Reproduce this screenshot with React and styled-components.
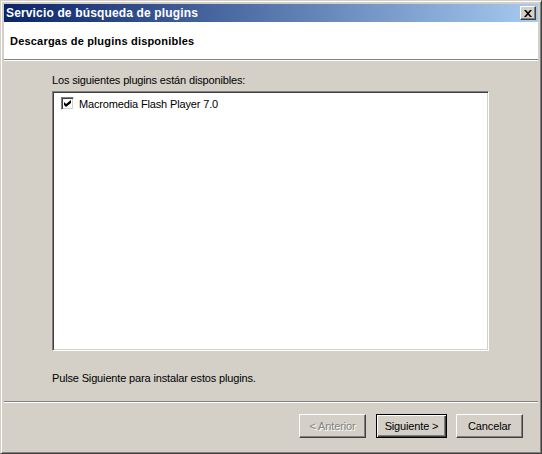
import React from "react";
import styled, { createGlobalStyle } from "styled-components";

const GlobalStyle = createGlobalStyle`
  html, body {
    margin: 0;
    padding: 0;
    background: #d4d0c8;
  }
  * {
    box-sizing: border-box;
  }
`;

const Window = styled.div`
  width: 542px;
  height: 454px;
  display: flex;
  flex-direction: column;
  background: #d4d0c8;
  border: 1px solid;
  border-color: #d4d0c8 #404040 #404040 #d4d0c8;
  box-shadow: inset 1px 1px #ffffff, inset -1px -1px #808080;
  padding: 3px;
  font-family: "Liberation Sans", Arial, sans-serif;
  font-size: 11px;
  letter-spacing: -0.15px;
  color: #000;
`;

const TitleBar = styled.div`
  height: 18px;
  display: flex;
  align-items: center;
  justify-content: space-between;
  padding: 0 2px 0 2px;
  background: linear-gradient(to right, #0a246a, #a6caf0);
`;

const Title = styled.span`
  color: #fff;
  font-weight: bold;
  font-size: 12px;
  letter-spacing: 0.15px;
`;

const CloseButton = styled.div`
  width: 16px;
  height: 14px;
  display: flex;
  align-items: center;
  justify-content: center;
  background: #d4d0c8;
  border: 1px solid;
  border-color: #ffffff #404040 #404040 #ffffff;
  box-shadow: inset -1px -1px #808080;
`;

const Header = styled.div`
  height: 37px;
  background: #fff;
  display: flex;
  align-items: center;
  padding-left: 6px;
  padding-top: 1px;
`;

const HeaderTitle = styled.h1`
  margin: 0;
  font-size: 11px;
  font-weight: bold;
  letter-spacing: 0.2px;
`;

const Separator = styled.div`
  height: 2px;
  border-top: 1px solid #808080;
  border-bottom: 1px solid #ffffff;
`;

const Body = styled.div`
  height: 340px;
  display: flex;
  flex-direction: column;
  padding: 13px 49px 0 48px;
`;

const Label = styled.div`
  height: 13px;
  line-height: 13px;
`;

const ListBox = styled.div`
  height: 260px;
  margin-top: 4px;
  background: #fff;
  border: 1px solid;
  border-color: #808080 #ffffff #ffffff #808080;
  box-shadow: inset 1px 1px #404040, inset -1px -1px #d4d0c8;
  padding: 5px 8px;
`;

const Item = styled.label`
  display: flex;
  align-items: center;
  gap: 5px;
  height: 13px;
`;

const CheckBox = styled.span`
  width: 13px;
  height: 13px;
  flex: none;
  display: flex;
  align-items: center;
  justify-content: center;
  background: #fff;
  border: 1px solid;
  border-color: #808080 #ffffff #ffffff #808080;
  box-shadow: inset 1px 1px #404040, inset -1px -1px #d4d0c8;
`;

const Hint = styled.div`
  height: 13px;
  line-height: 13px;
  margin-top: 21px;
`;

const Footer = styled.div`
  flex: 1;
  display: flex;
  justify-content: flex-end;
  align-items: flex-start;
  padding: 11px 15px 0 0;
`;

const Button = styled.button`
  width: ${(p) => p.$width || 67}px;
  height: 24px;
  margin-left: ${(p) => p.$gap || 10}px;
  padding: 0;
  font-family: inherit;
  font-size: 11px;
  letter-spacing: inherit;
  color: ${(p) => (p.disabled ? "#808080" : "#000")};
  text-shadow: ${(p) => (p.disabled ? "1px 1px #ffffff" : "none")};
  background: #d4d0c8;
  border: 1px solid;
  border-color: ${(p) =>
    p.$default ? "#000" : "#ffffff #404040 #404040 #ffffff"};
  box-shadow: ${(p) =>
    p.$default
      ? "inset 1px 1px #ffffff, inset -1px -1px #404040, inset -2px -2px #808080"
      : "inset -1px -1px #808080"};
`;

function CloseIcon() {
  return (
    <svg width="8" height="7" viewBox="0 0 8 7">
      <path d="M0 0h2l2 2.2L6 0h2L5 3.5 8 7H6L4 4.8 2 7H0l3-3.5z" fill="#000" />
    </svg>
  );
}

function CheckIcon() {
  return (
    <svg width="7" height="7" viewBox="0 0 7 7">
      <polygon points="0,2 2,4 7,0 7,3 2,7 0,5" fill="#000" />
    </svg>
  );
}

export default function App() {
  return (
    <>
      <GlobalStyle />
      <Window>
        <TitleBar>
          <Title>Servicio de búsqueda de plugins</Title>
          <CloseButton>
            <CloseIcon />
          </CloseButton>
        </TitleBar>
        <Header>
          <HeaderTitle>Descargas de plugins disponibles</HeaderTitle>
        </Header>
        <Separator />
        <Body>
          <Label>Los siguientes plugins están disponibles:</Label>
          <ListBox>
            <Item>
              <CheckBox>
                <CheckIcon />
              </CheckBox>
              Macromedia Flash Player 7.0
            </Item>
          </ListBox>
          <Hint>Pulse Siguiente para instalar estos plugins.</Hint>
        </Body>
        <Separator />
        <Footer>
          <Button disabled>&lt; Anterior</Button>
          <Button $default $width={71}>
            Siguiente &gt;
          </Button>
          <Button $gap={9}>Cancelar</Button>
        </Footer>
      </Window>
    </>
  );
}
